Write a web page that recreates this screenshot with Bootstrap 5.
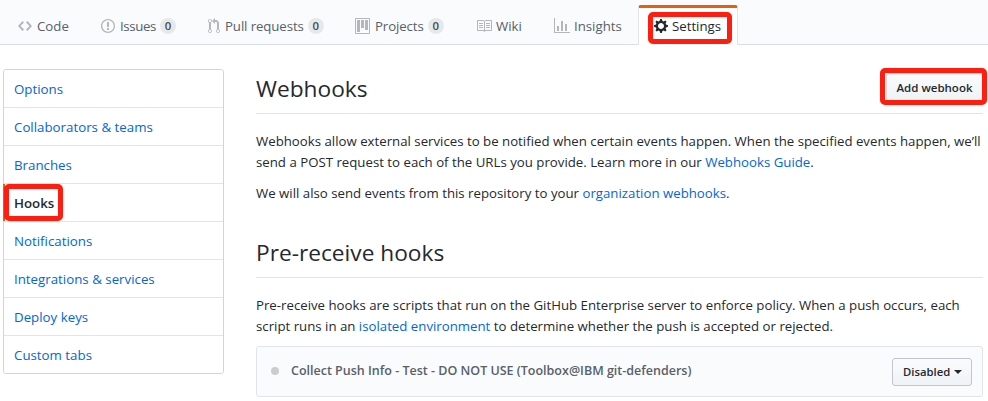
<!DOCTYPE html>
<html lang="en">
<head>
<meta charset="utf-8">
<meta name="viewport" content="width=device-width, initial-scale=1">
<title>Webhooks</title>
<link href="https://cdn.jsdelivr.net/npm/bootstrap@5.3.0/dist/css/bootstrap.min.css" rel="stylesheet">
<style>
body{font-family:"Open Sans","Noto Sans",sans-serif;font-size:13.24px;line-height:21px;color:#24292e;overflow:hidden}
a{color:#0366d6;text-decoration:none}
.repo-bar{height:45px;background:#fafbfc;border-bottom:1px solid #d8dfe5;padding-left:3px}
.repo-bar .nav-link{height:40px;padding:4px 0 0 15px;color:#586069;white-space:nowrap;border:0}
.repo-bar svg{fill:#b4b7ba;flex:none;margin-right:5px}
.repo-bar .t-wiki svg,.repo-bar .t-insights svg{margin-right:4px}
.repo-bar .t-wiki{padding-left:14px}
.repo-bar .nav-link.active{padding:0 0 1px 15px;margin-bottom:-1px;color:#24292e;background:#fff;border:1px solid #e1e4e8;border-top:3px solid #e36209;border-bottom:0;border-radius:3px 3px 0 0}
.repo-bar .active svg{fill:#24292e;margin-right:4px}
.t-code{width:83px}.t-issues{width:107px}.t-pulls{width:147px}.t-projects{width:122px}.t-wiki{width:77px}.t-insights{width:99px}.t-settings{width:100px}
.snug{letter-spacing:-.1px}
.snugger{letter-spacing:-.35px}
.tally{width:16px;height:16px;font-size:11.4px;font-weight:600;line-height:16px;background:#e7e8ea;color:#444d56}
.marked{position:relative}
.marked::after{content:"";position:absolute;border:5px solid #ff1d10;border-radius:5px;pointer-events:none;z-index:3}
.t-settings.marked::after{left:9px;top:4px;width:84px;height:32px}
.page{padding:24px 5px 0 3px;gap:32px}
.side-menu{width:221px;height:305px;border:1px solid #d1d5da;border-radius:3px;flex:none}
.side-menu .list-group-item{height:38px;padding:9px 10px 0;border:0;border-bottom:1px solid #e1e4e8;color:#0366d6;font-size:13.3px;line-height:21px;background:#fff;border-radius:0}
.side-menu .list-group-item:first-child{border-radius:3px 3px 0 0}
.side-menu .list-group-item:last-child{border-bottom:0;height:37px;border-radius:0 0 3px 3px}
.side-menu .list-group-item.active{color:#24292e;font-weight:600;margin:0;z-index:2}
.side-menu .active::before{content:"";position:absolute;left:-1px;top:0;bottom:0;width:2px;background:#e36209}
.side-menu .marked::after{left:0;top:0;width:59px;height:37px}
.section-head{height:45px;border-bottom:1px solid #e1e4e8;margin-bottom:17px}
.section-head h2{font-size:22.7px;line-height:36px;font-weight:400;margin:2px 0 0}
.pre-receive .section-head{height:43px}
.pre-receive{margin-top:31px}
.copy{white-space:nowrap;margin-bottom:10px}
.pre-receive .copy{margin-bottom:9px}
.gray-btn{height:28px;padding:0 10px;border:1px solid #c2c6ca;border-radius:3px;background:linear-gradient(#fafbfc,#eff3f6);color:#24292e;font-size:11.3px;font-weight:600;line-height:26px;white-space:nowrap}
.add-btn{width:97px;height:29px;padding:0;margin:4px 0 0;font-size:11.5px;line-height:27px;border-color:#d5d8db}
.add-wrap.marked::after{left:-6px;top:-1px;width:107px;height:37px}
.hook-row{height:51px;border:1px solid #e1e4e8;border-radius:3px;background:#fafbfc;padding:0 10px 0 14px}
.dot{width:8px;height:8px;background:#ccc;margin-bottom:2px}
.hook-name{font-size:12.5px;font-weight:600;color:#586069;margin-left:12px;line-height:20px;margin-bottom:1px}
.state-btn{width:80px;margin-top:1px}
.state-btn.dropdown-toggle::after{border-width:4px 4px 0;margin-left:4px;vertical-align:2px}
</style>
</head>
<body>
<nav class="repo-bar nav flex-nowrap align-items-end">
  <a class="nav-link t-code d-flex align-items-center" href="#"><svg width="14" height="16" viewBox="0 0 14 16"><path fill-rule="evenodd" d="M9.5 3L8 4.5 11.5 8 8 11.5 9.5 13 14 8 9.5 3zm-5 0L0 8l4.5 5L6 11.5 2.5 8 6 4.5 4.5 3z"/></svg><span>Code</span></a>
  <a class="nav-link t-issues d-flex align-items-center" href="#"><svg width="14" height="16" viewBox="0 0 14 16"><path fill-rule="evenodd" d="M7 2.3c3.14 0 5.7 2.56 5.7 5.7s-2.56 5.7-5.7 5.7A5.71 5.71 0 0 1 1.3 8c0-3.14 2.56-5.7 5.7-5.7zM7 1C3.14 1 0 4.14 0 8s3.14 7 7 7 7-3.14 7-7-3.14-7-7-7zm1 3H6v5h2V4zm0 6H6v2h2v-2z"/></svg><span class="snugger">Issues</span><span class="tally rounded-circle text-center ms-1">0</span></a>
  <a class="nav-link t-pulls d-flex align-items-center" href="#"><svg width="12" height="16" viewBox="0 0 12 16"><path fill-rule="evenodd" d="M11 11.28V5c-.03-.78-.34-1.47-.94-2.06C9.46 2.35 8.78 2.03 8 2H7V0L4 3l3 3V4h1c.27.02.48.11.69.31.21.2.3.42.31.69v6.28A1.993 1.993 0 0 0 10 15a1.993 1.993 0 0 0 1-3.72zm-1 2.92c-.66 0-1.2-.55-1.2-1.2 0-.65.55-1.2 1.2-1.2.65 0 1.2.55 1.2 1.2 0 .65-.55 1.2-1.2 1.2zM4 3c0-1.11-.89-2-2-2a1.993 1.993 0 0 0-1 3.72v6.56A1.993 1.993 0 0 0 2 15a1.993 1.993 0 0 0 1-3.72V4.72c.59-.34 1-.98 1-1.72zm-.8 10c0 .66-.55 1.2-1.2 1.2-.65 0-1.2-.55-1.2-1.2 0-.65.55-1.2 1.2-1.2.65 0 1.2.55 1.2 1.2zM2 4.2C1.34 4.2.8 3.65.8 3c0-.65.55-1.2 1.2-1.2.65 0 1.2.55 1.2 1.2 0 .65-.55 1.2-1.2 1.2z"/></svg><span class="snug">Pull requests</span><span class="tally rounded-circle text-center ms-1">0</span></a>
  <a class="nav-link t-projects d-flex align-items-center" href="#"><svg width="15" height="16" viewBox="0 0 15 16"><path fill-rule="evenodd" d="M10 12h3V2h-3v10zm-4-2h3V2H6v8zm-4 4h3V2H2v12zm-1 1h13V1H1v14zM14 0H1a1 1 0 0 0-1 1v14a1 1 0 0 0 1 1h13a1 1 0 0 0 1-1V1a1 1 0 0 0-1-1z"/></svg><span class="snug">Projects</span><span class="tally rounded-circle text-center ms-1">0</span></a>
  <a class="nav-link t-wiki d-flex align-items-center" href="#"><svg width="16" height="16" viewBox="0 0 16 16"><path fill-rule="evenodd" d="M3 5h4v1H3V5zm0 3h4V7H3v1zm0 2h4V9H3v1zm11-5h-4v1h4V5zm0 2h-4v1h4V7zm0 2h-4v1h4V9zm2-6v9c0 .55-.45 1-1 1H9.5l-1 1-1-1H2c-.55 0-1-.45-1-1V3c0-.55.45-1 1-1h5.5l1 1 1-1H15c.55 0 1 .45 1 1zm-8 .5L7.5 3H2v9h6V3.5zm7-.5H9.5l-.5.5V12h6V3z"/></svg><span>Wiki</span></a>
  <a class="nav-link t-insights d-flex align-items-center" href="#"><svg width="16" height="16" viewBox="0 0 16 16"><path fill-rule="evenodd" d="M16 14v1H0V0h1v14h15zM5 13H3V8h2v5zm4 0H7V3h2v10zm4 0h-2V6h2v7z"/></svg><span>Insights</span></a>
  <a class="nav-link active marked t-settings d-flex align-items-center" href="#"><svg width="14" height="16" viewBox="0 0 14 16"><path fill-rule="evenodd" d="M14 8.77v-1.6l-1.94-.64-.45-1.09.88-1.84-1.13-1.13-1.81.91-1.09-.45-.69-1.92h-1.6l-.63 1.94-1.11.45-1.84-.88-1.13 1.13.91 1.81-.45 1.09L0 7.23v1.59l1.94.64.45 1.09-.88 1.84 1.13 1.13 1.81-.91 1.09.45.69 1.92h1.59l.63-1.94 1.11-.45 1.84.88 1.13-1.13-.92-1.81.47-1.09L14 8.75v.02zM7 11c-1.66 0-3-1.34-3-3s1.34-3 3-3 3 1.34 3 3-1.34 3-3 3z"/></svg><span>Settings</span></a>
</nav>

<div class="page d-flex align-items-start">
  <div class="side-menu list-group">
    <a class="list-group-item" href="#">Options</a>
    <a class="list-group-item" href="#">Collaborators &amp; teams</a>
    <a class="list-group-item" href="#">Branches</a>
    <a class="list-group-item active marked" href="#">Hooks</a>
    <a class="list-group-item" href="#">Notifications</a>
    <a class="list-group-item" href="#">Integrations &amp; services</a>
    <a class="list-group-item" href="#">Deploy keys</a>
    <a class="list-group-item" href="#">Custom tabs</a>
  </div>

  <main class="flex-grow-1">
    <section>
      <div class="section-head d-flex justify-content-between align-items-start">
        <h2>Webhooks</h2>
        <div class="add-wrap marked"><button type="button" class="btn gray-btn add-btn">Add webhook</button></div>
      </div>
      <p class="copy">Webhooks allow external services to be notified when certain events happen. When the specified events happen, we’ll<br>send a POST request to each of the URLs you provide. Learn more in our <a href="#">Webhooks Guide</a>.</p>
      <p class="copy mb-0">We will also send events from this repository to your <a href="#">organization webhooks</a>.</p>
    </section>
    <section class="pre-receive">
      <div class="section-head"><h2>Pre-receive hooks</h2></div>
      <p class="copy">Pre-receive hooks are scripts that run on the GitHub Enterprise server to enforce policy. When a push occurs, each<br>script runs in an <a href="#">isolated environment</a> to determine whether the push is accepted or rejected.</p>
      <div class="hook-row d-flex align-items-center">
        <span class="dot rounded-circle"></span>
        <span class="hook-name">Collect Push Info - Test - DO NOT USE (Toolbox@IBM git-defenders)</span>
        <button type="button" class="btn gray-btn state-btn dropdown-toggle ms-auto">Disabled</button>
      </div>
    </section>
  </main>
</div>
<script src="https://cdn.jsdelivr.net/npm/bootstrap@5.3.0/dist/js/bootstrap.bundle.min.js"></script>
</body>
</html>
